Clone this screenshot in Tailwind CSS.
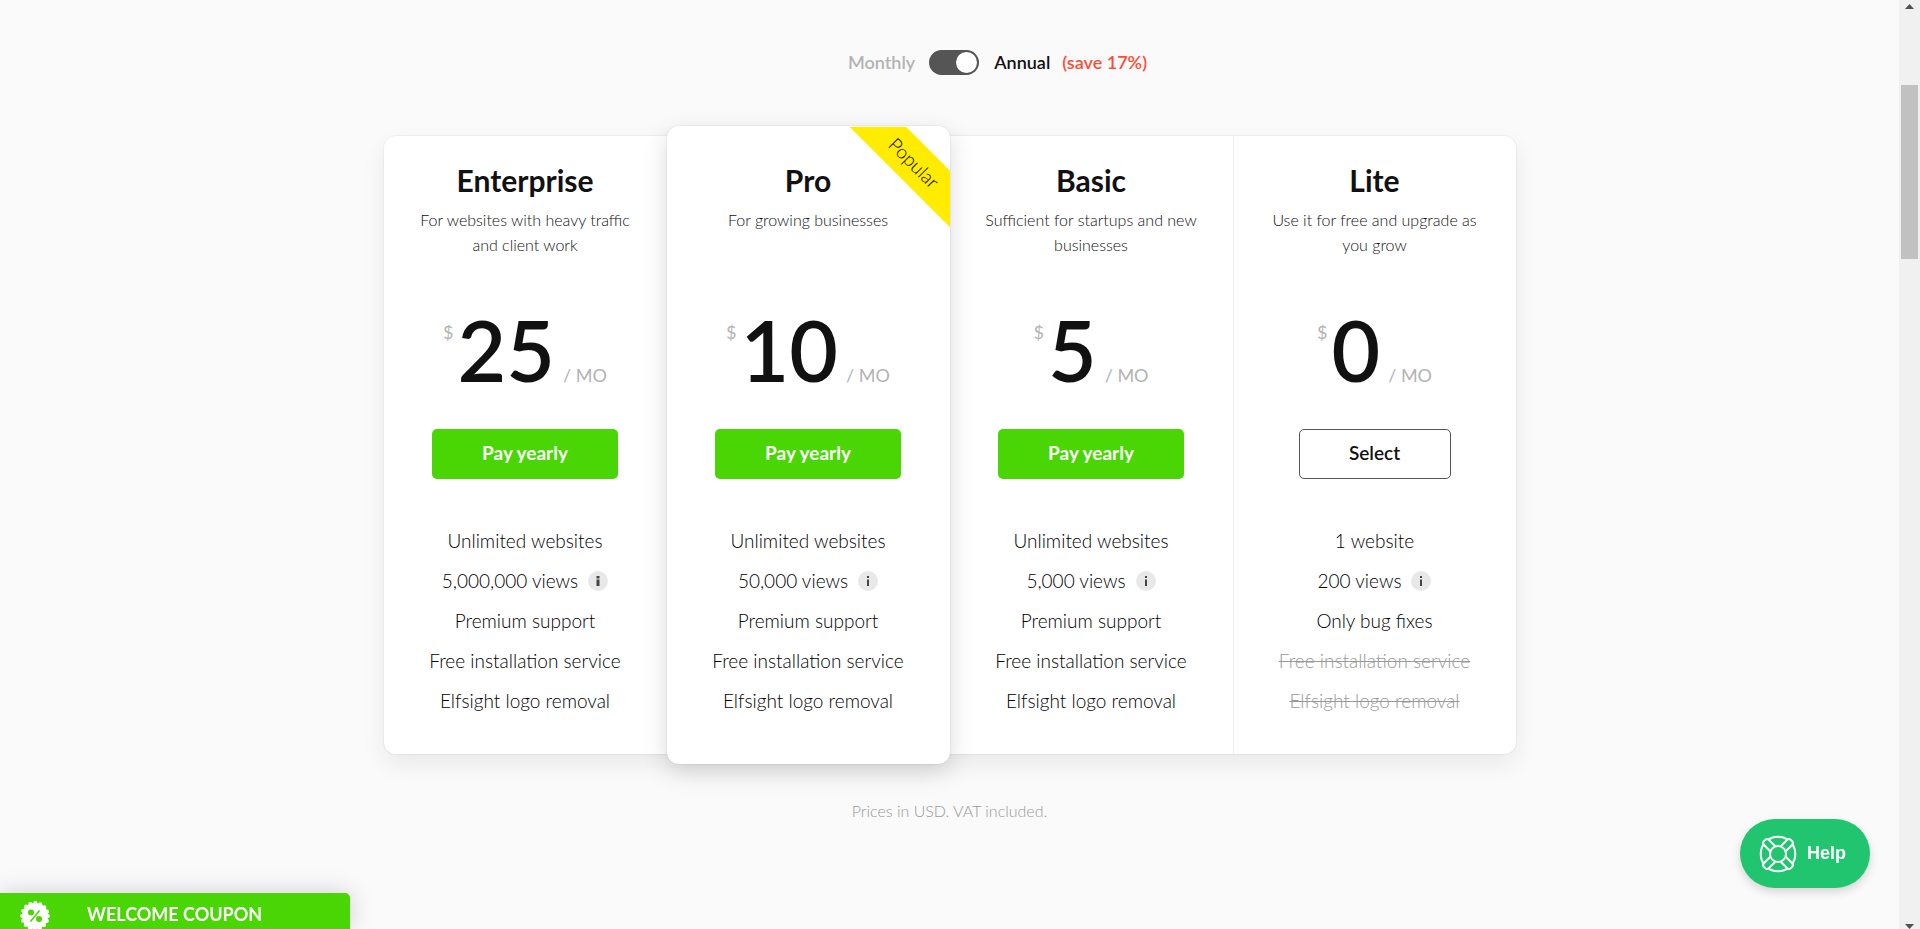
<!DOCTYPE html>
<html lang="en">
<head>
    <meta charset="UTF-8">
    <meta name="viewport" content="width=device-width, initial-scale=1.0">
    <title>Pricing</title>
    <script src="https://cdn.jsdelivr.net/npm/@tailwindcss/browser@4"></script>
</head>
<body class="flex h-screen overflow-hidden bg-[#fafafa] font-['Lato',sans-serif] text-[#111]">
    <main class="flex-1 pt-[50px]">
        <!-- Billing period -->
        <div class="flex items-center justify-center pl-[96px] text-[18px] leading-[25px] font-semibold">
            <label for="period" class="text-[#b3b3b3]">Monthly</label>
            <input id="period" type="checkbox" role="switch" checked aria-label="Annual billing"
                   class="ml-[14px] h-[25px] w-[50px] appearance-none rounded-full bg-[#555] before:mt-[2px] before:ml-[2px] before:block before:size-[21px] before:rounded-full before:bg-white checked:before:ml-[27px]">
            <label for="period" class="ml-[15px]">Annual</label>
            <span class="ml-3 text-[#ff4b36]">(save 17%)</span>
        </div>

        <!-- Plans -->
        <div class="mx-auto mt-[61px] grid max-w-[1132px] grid-cols-4 rounded-xl bg-white text-center shadow-[0_0_1px_1px_rgba(0,0,0,0.04),0_10px_25px_rgba(0,0,0,0.07)]">
            <section class="flex flex-col items-center px-8 pt-6 pb-[33px]">
                <h2 class="text-[30px] leading-10 font-bold">Enterprise</h2>
                <p class="mt-[7px] h-[50px] text-[16px] leading-[25px] font-light text-[#111]">For websites with heavy traffic and client work</p>
                <div class="mt-[49px] flex">
                    <span class="mt-[14px] text-[18px] leading-6 text-[#b3b3b3]">$</span>
                    <span class="mt-[2px] ml-1 text-[84px] leading-none font-semibold">25</span>
                    <span class="mb-[5px] ml-2 self-end text-[18px] leading-6 text-[#b3b3b3]">/ MO</span>
                </div>
                <button class="mt-[37px] h-[50px] w-[186px] rounded-[5px] bg-[#4ad504] pb-[2px] text-[19px] font-bold text-white">Pay yearly</button>
                <ul class="mt-[42px] text-[19px] leading-10 font-light text-black">
                    <li>Unlimited websites</li>
                    <li class="flex items-center justify-center gap-[10px]">5,000,000 views
                        <svg class="size-5" viewBox="0 0 20 20"><circle cx="10" cy="10" r="10" fill="#e8e8e8"/><path d="M8.5 5h3v2.4h-3zM8.5 8.6h3V15h-3z" fill="#444"/></svg>
                    </li>
                    <li>Premium support</li>
                    <li>Free installation service</li>
                    <li>Elfsight logo removal</li>
                </ul>
            </section>

            <section class="relative -my-[10px] flex flex-col items-center rounded-xl bg-white px-8 pt-[34px] pb-[43px] shadow-[0_0_1px_1px_rgba(0,0,0,0.04),0_8px_25px_rgba(0,0,0,0.15)]">
                <div class="absolute top-px right-0 size-[100px] overflow-hidden">
                    <div class="absolute top-4 -left-4 h-10 w-[160px] rotate-45 bg-[#ffec00] text-[19px] leading-10 font-light text-black">Popular</div>
                </div>
                <h2 class="text-[30px] leading-10 font-bold">Pro</h2>
                <p class="mt-[7px] h-[50px] text-[16px] leading-[25px] font-light text-[#111]">For growing businesses</p>
                <div class="mt-[49px] flex">
                    <span class="mt-[14px] text-[18px] leading-6 text-[#b3b3b3]">$</span>
                    <span class="mt-[2px] ml-1 text-[84px] leading-none font-semibold">10</span>
                    <span class="mb-[5px] ml-2 self-end text-[18px] leading-6 text-[#b3b3b3]">/ MO</span>
                </div>
                <button class="mt-[37px] h-[50px] w-[186px] rounded-[5px] bg-[#4ad504] pb-[2px] text-[19px] font-bold text-white">Pay yearly</button>
                <ul class="mt-[42px] text-[19px] leading-10 font-light text-black">
                    <li>Unlimited websites</li>
                    <li class="flex items-center justify-center gap-[10px]">50,000 views
                        <svg class="size-5" viewBox="0 0 20 20"><circle cx="10" cy="10" r="10" fill="#e8e8e8"/><path d="M9 5h2v2H9zM9 8.6h2V15H9z" fill="#444"/></svg>
                    </li>
                    <li>Premium support</li>
                    <li>Free installation service</li>
                    <li>Elfsight logo removal</li>
                </ul>
            </section>

            <section class="flex flex-col items-center px-8 pt-6 pb-[33px]">
                <h2 class="text-[30px] leading-10 font-bold">Basic</h2>
                <p class="mt-[7px] h-[50px] text-[16px] leading-[25px] font-light text-[#111]">Sufficient for startups and new businesses</p>
                <div class="mt-[49px] flex">
                    <span class="mt-[14px] text-[18px] leading-6 text-[#b3b3b3]">$</span>
                    <span class="mt-[2px] ml-1 text-[84px] leading-none font-semibold">5</span>
                    <span class="mb-[5px] ml-2 self-end text-[18px] leading-6 text-[#b3b3b3]">/ MO</span>
                </div>
                <button class="mt-[37px] h-[50px] w-[186px] rounded-[5px] bg-[#4ad504] pb-[2px] text-[19px] font-bold text-white">Pay yearly</button>
                <ul class="mt-[42px] text-[19px] leading-10 font-light text-black">
                    <li>Unlimited websites</li>
                    <li class="flex items-center justify-center gap-[10px]">5,000 views
                        <svg class="size-5" viewBox="0 0 20 20"><circle cx="10" cy="10" r="10" fill="#e8e8e8"/><path d="M9 5h2v2H9zM9 8.6h2V15H9z" fill="#444"/></svg>
                    </li>
                    <li>Premium support</li>
                    <li>Free installation service</li>
                    <li>Elfsight logo removal</li>
                </ul>
            </section>

            <section class="flex flex-col items-center border-l border-[#eee] px-8 pt-6 pb-[33px]">
                <h2 class="text-[30px] leading-10 font-bold">Lite</h2>
                <p class="mt-[7px] h-[50px] text-[16px] leading-[25px] font-light text-[#111]">Use it for free and upgrade as you grow</p>
                <div class="mt-[49px] flex">
                    <span class="mt-[14px] text-[18px] leading-6 text-[#b3b3b3]">$</span>
                    <span class="mt-[2px] ml-1 text-[84px] leading-none font-semibold">0</span>
                    <span class="mb-[5px] ml-2 self-end text-[18px] leading-6 text-[#b3b3b3]">/ MO</span>
                </div>
                <button class="mt-[37px] h-[50px] w-[152px] rounded-[5px] border border-[#555] bg-white pb-[2px] text-[19px] font-semibold">Select</button>
                <ul class="mt-[42px] text-[19px] leading-10 font-light text-black">
                    <li>1 website</li>
                    <li class="flex items-center justify-center gap-[10px]">200 views
                        <svg class="size-5" viewBox="0 0 20 20"><circle cx="10" cy="10" r="10" fill="#e8e8e8"/><path d="M9 5h2v2H9zM9 8.6h2V15H9z" fill="#444"/></svg>
                    </li>
                    <li>Only bug fixes</li>
                    <li class="text-[#999] line-through">Free installation service</li>
                    <li class="text-[#999] line-through">Elfsight logo removal</li>
                </ul>
            </section>
        </div>

        <p class="mt-[45px] text-center text-[16px] leading-6 font-light text-[#999]">Prices in USD. VAT included.</p>
    </main>

    <!-- Scrollbar -->
    <div class="flex w-[21px] flex-col items-center justify-between bg-[#f0f0f0]">
        <svg class="mt-1 h-[5px] w-[9px]" viewBox="0 0 9 5"><path d="M0 5h9L4.5 0z" fill="#505050"/></svg>
        <div class="mt-[76px] h-[174px] w-[17px] bg-[#c1c1c1]"></div>
        <div class="flex-1"></div>
        <svg class="h-[5px] w-[9px]" viewBox="0 0 9 5"><path d="M0 0h9L4.5 5z" fill="#505050"/></svg>
    </div>

    <!-- Coupon -->
    <button class="fixed bottom-0 left-0 flex h-9 w-[350px] items-start rounded-tr-[5px] bg-[#4ad504] pl-5 text-white shadow-[0_0_25px_rgba(0,0,0,0.18)]">
        <span class="h-9 overflow-hidden pt-2">
            <svg class="size-[30px]" viewBox="0 0 30 30">
                <circle cx="15" cy="15" r="13" fill="#fff"/>
                <circle cx="15" cy="15" r="12.8" fill="none" stroke="#fff" stroke-width="4.2" stroke-linecap="round" stroke-dasharray="0 5.026"/>
                <circle cx="11" cy="11.5" r="3" fill="#4ad504"/>
                <circle cx="19" cy="18" r="3" fill="#4ad504"/>
                <path d="M19.5 9.5l-9 11" stroke="#4ad504" stroke-width="1.6"/>
            </svg>
        </span>
        <span class="ml-[37px] text-[18px] leading-[42px] font-bold">WELCOME COUPON</span>
    </button>

    <!-- Help -->
    <button class="fixed right-[50px] bottom-[41px] flex h-[69px] w-[130px] items-center rounded-full bg-[#22c56f] pl-[18px] font-['Liberation_Sans',sans-serif] text-[18px] font-bold text-white shadow-[0_4px_10px_rgba(0,0,0,0.15)]">
        <svg class="size-10" viewBox="-20 -20 40 40" fill="#22c56f" stroke="#fff" stroke-width="2">
            <circle r="17.3"/>
            <rect x="-3.5" y="-19" width="7" height="13" rx="2.5" transform="rotate(45)"/>
            <rect x="-3.5" y="-19" width="7" height="13" rx="2.5" transform="rotate(135)"/>
            <rect x="-3.5" y="-19" width="7" height="13" rx="2.5" transform="rotate(225)"/>
            <rect x="-3.5" y="-19" width="7" height="13" rx="2.5" transform="rotate(315)"/>
            <circle r="8"/>
        </svg>
        <span class="ml-[9px]">Help</span>
    </button>
</body>
</html>
